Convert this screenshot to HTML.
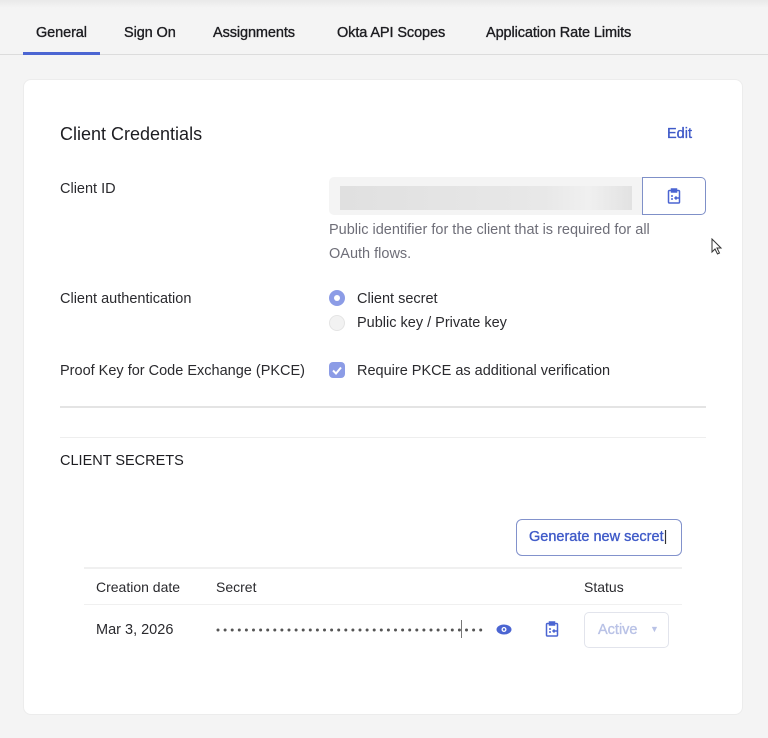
<!DOCTYPE html>
<html><head><meta charset="utf-8"><style>
*{box-sizing:border-box;margin:0;padding:0}
body{width:768px;height:738px;background:#f4f4f4;font-family:"Liberation Sans",sans-serif;color:#1d1d21;position:relative;overflow:hidden;font-size:14.5px}
.a{position:absolute;white-space:nowrap}
.tab{position:absolute;top:25px;font-size:14.5px;color:#1d1d21;-webkit-text-stroke:0.35px #1d1d21;letter-spacing:-0.1px}
.card{position:absolute;left:23px;top:79px;width:720px;height:636px;background:#fff;border-radius:8px;border:1px solid #ececec}
.lbl{font-size:14.5px;color:#2a2a2e}
.med{-webkit-text-stroke:0.35px currentColor}
</style></head><body>
<div class="a" style="left:0;top:0;width:768px;height:8px;background:linear-gradient(#e9e9e9,#f4f4f4)"></div>
<div class="tab" style="left:36px">General</div>
<div class="tab" style="left:124px">Sign On</div>
<div class="tab" style="left:213px">Assignments</div>
<div class="tab" style="left:337px">Okta API Scopes</div>
<div class="tab" style="left:486px">Application Rate Limits</div>
<div class="a" style="left:0;top:54px;width:768px;height:1px;background:#dcdcdc"></div>
<div class="a" style="left:23px;top:52px;width:77px;height:3px;background:#4b65d2"></div>
<div class="card"></div>
<div class="a" style="left:60px;top:124px;font-size:18px">Client Credentials</div>
<div class="a med" style="left:667px;top:126px;color:#3f5ac8;font-size:14.5px">Edit</div>
<div class="a lbl" style="left:60px;top:181px">Client ID</div>
<div class="a" style="left:329px;top:177px;width:314px;height:38px;background:#f4f4f4;border-radius:5px 0 0 5px"></div>
<div class="a" style="left:340px;top:186px;width:292px;height:24px;background:linear-gradient(90deg,#e0e0e0,#e8e8e8 70%,#f0f0f0 85%,#e2e2e2)"></div>
<div class="a" style="left:642px;top:177px;width:64px;height:38px;border:1px solid #7f90c8;border-radius:0 5px 5px 0;background:#fff"></div>
<svg class="a" style="left:667px;top:188px" width="14" height="16" viewBox="0 0 14 16" fill="none" stroke="#4b65d2" stroke-width="1.5"><rect x="1.5" y="2.5" width="11" height="12.5" rx="1"/><rect x="4.5" y="1" width="5" height="3" fill="#4b65d2"/><path d="M4 8h2M4 11h2M12 10H8M9.5 8.5L8 10l1.5 1.5"/></svg>
<div class="a" style="left:329px;top:218px;color:#6e6e78;line-height:24px;font-size:14.5px">Public identifier for the client that is required for all<br>OAuth flows.</div>
<svg class="a" style="left:711px;top:238px" width="12" height="18"><path d="M1 1v13l3-3 2.5 5 2-1-2.5-5h4z" fill="#fff" stroke="#333"/></svg>
<div class="a lbl" style="left:60px;top:291px">Client authentication</div>
<div class="a" style="left:329px;top:290px;width:16px;height:16px;border-radius:50%;background:#8c9ce6"></div>
<div class="a" style="left:334px;top:295px;width:6px;height:6px;border-radius:50%;background:#fff"></div>
<div class="a lbl" style="left:357px;top:291px">Client secret</div>
<div class="a" style="left:329px;top:315px;width:16px;height:16px;border-radius:50%;background:#f2f2f2;border:1px solid #e4e4e4"></div>
<div class="a lbl" style="left:357px;top:315px">Public key / Private key</div>
<div class="a lbl" style="left:60px;top:363px">Proof Key for Code Exchange (PKCE)</div>
<div class="a" style="left:329px;top:362px;width:16px;height:16px;border-radius:4px;background:#8c9ce6"></div>
<svg class="a" style="left:329px;top:362px" width="16" height="16"><path d="M4 8.5l3 3 5-6" stroke="#fff" stroke-width="2" fill="none"/></svg>
<div class="a lbl" style="left:357px;top:363px">Require PKCE as additional verification</div>
<div class="a" style="left:60px;top:406px;width:646px;height:2px;background:#e4e4e4"></div>
<div class="a" style="left:60px;top:437px;width:646px;height:1px;background:#eee"></div>
<div class="a" style="left:60px;top:453px;font-size:14.5px">CLIENT SECRETS</div>
<div class="a" style="left:516px;top:519px;width:166px;height:37px;border:1px solid #8292cc;border-radius:6px"></div>
<div class="a med" style="left:529px;top:529px;color:#3f5ac8;font-size:14.5px">Generate new secret<span style="-webkit-text-stroke:0;color:#333">|</span></div>
<div class="a" style="left:84px;top:567px;width:598px;height:2px;background:#f0f0f0"></div>
<div class="a lbl" style="left:96px;top:579px;font-size:14px">Creation date</div>
<div class="a lbl" style="left:216px;top:579px;font-size:14px">Secret</div>
<div class="a lbl" style="left:584px;top:579px;font-size:14px">Status</div>
<div class="a" style="left:84px;top:604px;width:598px;height:1px;background:#f0f0f0"></div>
<div class="a lbl" style="left:96px;top:622px">Mar 3, 2026</div>
<svg class="a" style="left:216px;top:627px" width="272" height="6"><line x1="2" y1="3" x2="270" y2="3" stroke="#555" stroke-width="3" stroke-linecap="round" stroke-dasharray="0 7.1"/></svg>
<div class="a" style="left:461px;top:620px;width:1px;height:18px;background:#777"></div>
<svg class="a" style="left:496px;top:624px" width="16" height="11"><ellipse cx="8" cy="5.5" rx="7.5" ry="5" fill="#4b65d2"/><circle cx="8" cy="5.5" r="2.5" fill="#fff"/><circle cx="8" cy="5.5" r="1.2" fill="#4b65d2"/></svg>
<svg class="a" style="left:545px;top:621px" width="14" height="16" viewBox="0 0 14 16" fill="none" stroke="#4b65d2" stroke-width="1.5"><rect x="1.5" y="2.5" width="11" height="12.5" rx="1"/><rect x="4.5" y="1" width="5" height="3" fill="#4b65d2"/><path d="M4 8h2M4 11h2M12 10H8M9.5 8.5L8 10l1.5 1.5"/></svg>
<div class="a" style="left:584px;top:612px;width:85px;height:36px;border:1px solid #e2e4ec;border-radius:5px"></div>
<div class="a med" style="left:598px;top:622px;color:#b9c2e6;font-size:14.5px">Active</div>
<div class="a" style="left:650px;top:624px;color:#b9c2e6;font-size:9px">▼</div>
</body></html>
